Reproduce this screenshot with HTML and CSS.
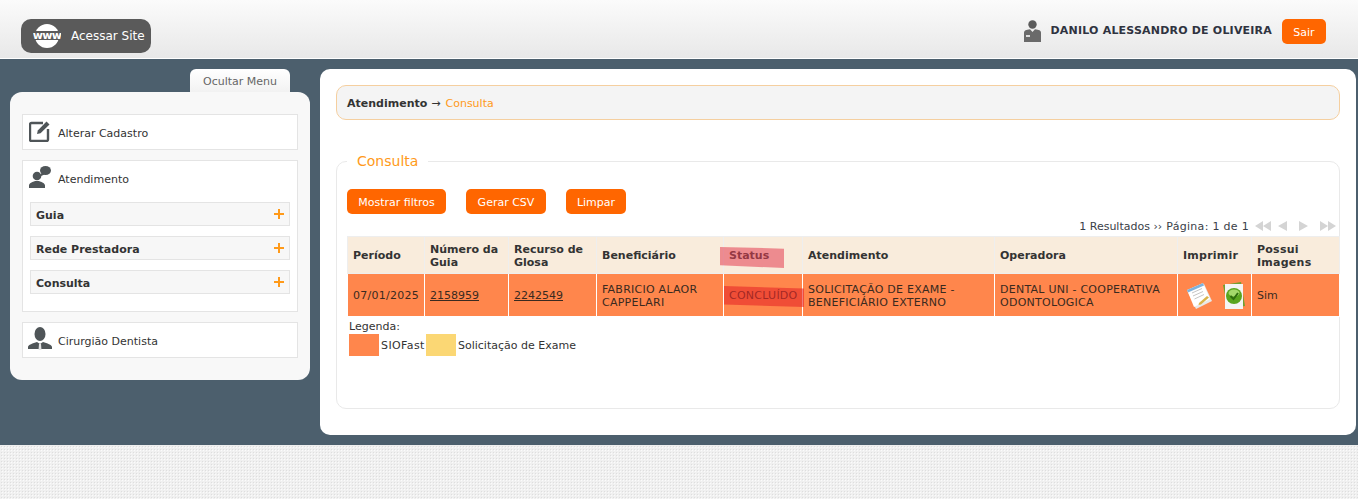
FILE: index.html
```html
<!doctype html>
<html lang="pt-BR">
<head>
    <meta charset="UTF-8">
    <title>Consulta</title>
    <link rel="stylesheet" href="styles.css">
</head>
<body>
    <header class="topbar">
        <a class="site-btn" href="#">
            <svg class="site-icon" width="28" height="24" viewBox="0 0 28 24">
                <circle cx="14" cy="12" r="12" fill="#fff"/>
                <rect x="0" y="7" width="28" height="9" fill="#5a5a5a"/>
                <text x="14" y="15" text-anchor="middle" class="www">www</text>
            </svg>
            Acessar Site
        </a>
        <div class="user">
            <svg width="17" height="22" viewBox="0 0 17 22">
                <circle cx="8.500" cy="4.500" r="4.200" fill="#5c5c5c"/>
                <path d="M0 22V12.500C0 10.500 2 9.800 6 9.200L8.500 12L11 9.200C15 9.800 17 10.500 17 12.500V22Z" fill="#6a6a6a"/>
                <rect x="2" y="15" width="4" height="2" fill="#ddd"/>
            </svg>
            <strong class="user-name">DANILO ALESSANDRO DE OLIVEIRA</strong>
            <a class="btn btn-exit" href="#">Sair</a>
        </div>
    </header>

    <div class="page">
        <aside class="sidebar">
            <div class="menu-tab">Ocultar Menu</div>
            <nav class="menu">
                <div class="menu-item">
                    <div class="menu-head">
                        <svg width="22" height="22" viewBox="0 0 22 22">
                            <path d="M14 3H2.500A1.500 1.500 0 0 0 1 4.500V19.500A1.500 1.500 0 0 0 2.500 21H17.500A1.500 1.500 0 0 0 19 19.500V9" fill="none" stroke="#4f5558" stroke-width="2.400"/>
                            <path d="M8 14L8.800 10.500L17.500 1.500L20.500 4.500L11.500 13.200Z" fill="#4f5558"/>
                        </svg>
                        Alterar Cadastro
                    </div>
                </div>
                <div class="menu-item menu-open">
                    <div class="menu-head">
                        <svg width="22" height="22" viewBox="0 0 22 22">
                            <circle cx="8" cy="10" r="4.300" fill="#4f5558"/>
                            <path d="M0 22V19.500C0 17 3.500 16 6 15H10C12.500 16 16 17 16 19.500V22Z" fill="#4f5558"/>
                            <ellipse cx="16.500" cy="4.500" rx="5.500" ry="4.500" fill="#4f5558"/>
                            <path d="M12.500 7L11 10.500L15.500 8.500Z" fill="#4f5558"/>
                        </svg>
                        Atendimento
                    </div>
                    <div class="submenu">Guia<span class="plus"></span></div>
                    <div class="submenu">Rede Prestadora<span class="plus"></span></div>
                    <div class="submenu">Consulta<span class="plus"></span></div>
                </div>
                <div class="menu-item">
                    <div class="menu-head menu-head-wide">
                        <svg width="24" height="24" viewBox="0 0 24 24">
                            <ellipse cx="12" cy="7" rx="5.500" ry="7" fill="#4f5558"/>
                            <path d="M0 22V20C0 17.500 5 16.500 9 15L12 17L15 15C19 16.500 24 17.500 24 20V22Z" fill="#4f5558"/>
                            <path d="M11 17H13L13.500 23H10.500Z" fill="#e4e4e4"/>
                        </svg>
                        Cirurgião Dentista
                    </div>
                </div>
            </nav>
        </aside>

        <main class="content">
            <div class="breadcrumb"><strong>Atendimento</strong> → <span class="orange">Consulta</span></div>

            <fieldset class="panel">
                <legend>Consulta</legend>
                <div class="actions">
                    <a class="btn btn-filter" href="#">Mostrar filtros</a>
                    <a class="btn btn-csv" href="#">Gerar CSV</a>
                    <a class="btn btn-clear" href="#">Limpar</a>
                </div>
                <div class="pager">
                    <span>1 Resultados ››</span>
                    <span class="pager-page">Página: 1 de 1</span>
                    <svg width="82" height="10" viewBox="0 0 82 10" class="pager-arrows">
                        <path d="M8 0V10L0 5ZM16 0V10L8 5Z M32 0V10L23 5Z M44 0V10L53 5Z M65 0V10L73 5ZM73 0V10L81 5Z" fill="#d4d4d4"/>
                    </svg>
                </div>
                <table class="grid">
                    <colgroup>
                        <col class="c1"><col class="c2"><col class="c3"><col class="c4"><col class="c5">
                        <col class="c6"><col class="c7"><col class="c8"><col class="c9">
                    </colgroup>
                    <thead>
                        <tr>
                            <th>Período</th>
                            <th>Número da Guia</th>
                            <th>Recurso de Glosa</th>
                            <th>Beneficiário</th>
                            <th class="marked">Status<span class="mark mark-head"></span></th>
                            <th>Atendimento</th>
                            <th>Operadora</th>
                            <th class="wide-head">Imprimir</th>
                            <th class="wide-head">Possui Imagens</th>
                        </tr>
                    </thead>
                    <tbody>
                        <tr>
                            <td class="caps">07/01/2025</td>
                            <td><a href="#">2158959</a></td>
                            <td><a href="#">2242549</a></td>
                            <td class="caps">FABRICIO ALAOR CAPPELARI</td>
                            <td class="marked caps">CONCLUÍDO<span class="mark mark-row"></span></td>
                            <td class="caps">SOLICITAÇÃO DE EXAME - BENEFICIÁRIO EXTERNO</td>
                            <td class="caps">DENTAL UNI - COOPERATIVA ODONTOLOGICA</td>
                            <td class="print-cell">
                                <svg width="28" height="28" viewBox="0 0 28 28">
                                    <path d="M2 10L18 2L26 19L10 27Z" fill="#e8e8e8"/>
                                    <path d="M1 8L17 1L24 17L8 25Z" fill="#fff"/>
                                    <path d="M1 8L17 1L18 3.500L2 10.500Z" fill="#7fb2dc"/>
                                    <path d="M6 11L16 6.500M7 14L17 9.500M8.500 17L18 12.500" stroke="#c5c5c5"/>
                                    <path d="M13 21L21 14L23 15.500L15 22.500L12.500 23Z" fill="#d9b44a"/>
                                </svg>
                                <svg width="24" height="28" viewBox="0 0 24 28">
                                    <path d="M1 3L19 0L23 24L6 27Z" fill="#6fa030"/>
                                    <rect x="3" y="2" width="18" height="25" fill="#f4f4f4"/>
                                    <circle cx="12" cy="14" r="8" fill="#5aa51f"/>
                                    <ellipse cx="12" cy="11" rx="5.500" ry="3.500" fill="#a4d96b"/>
                                    <path d="M8.500 14L11.500 17L16 11" fill="none" stroke="#2f6d0e" stroke-width="2"/>
                                </svg>
                            </td>
                            <td>Sim</td>
                        </tr>
                    </tbody>
                </table>
                <div class="legend-title">Legenda:</div>
                <div class="legend">
                    <span class="swatch swatch-siofast"></span><span class="legend-siofast">SIOFast</span>
                    <span class="swatch swatch-exame"></span><span>Solicitação de Exame</span>
                </div>
            </fieldset>
        </main>
    </div>

    <footer class="footer"></footer>
</body>
</html>
```

FILE: styles.css
```css
* {
    box-sizing: border-box;
}
html, body {
    height: 100%;
}
body {
    margin: 0;
    font-family: "DejaVu Sans", Verdana, sans-serif;
    font-size: 11px;
    color: #333;
    overflow: hidden;
}
a {
    color: inherit;
}
.orange {
    color: #ff9a1a;
    margin-left: 1px;
}

/* topo */
.topbar {
    height: 59px;
    border-bottom: 1px solid #fff;
    background: linear-gradient(#fbfbfb, #e8e8e8);
    display: flex;
    justify-content: space-between;
    align-items: flex-start;
    padding: 19px 32px 0 21px;
}
.site-btn {
    width: 130px;
    height: 34px;
    background: #5a5a5a;
    border-radius: 10px;
    color: #fff;
    text-decoration: none;
    font-size: 12px;
    display: flex;
    align-items: center;
    gap: 10px;
    padding-left: 12px;
}
.www {
    font-size: 11px;
    font-weight: bold;
    fill: #fff;
    font-family: "DejaVu Sans", sans-serif;
    letter-spacing: -0.6px;
}
.user {
    display: flex;
    align-items: flex-start;
    color: #2f3340;
}
.user svg {
    margin-top: 1px;
}
.user-name {
    margin: 5px 10px 0 10px;
    letter-spacing: 0.2px;
}
.btn {
    display: flex;
    align-items: center;
    justify-content: center;
    background: #ff6600;
    color: #fff;
    border-radius: 5px;
    text-decoration: none;
    height: 25px;
    padding-top: 2px;
}
.btn-exit {
    width: 44px;
}

/* area central */
.page {
    height: 386px;
    background: #4c5f6d;
    display: flex;
    padding: 10px 2px 10px 10px;
    gap: 10px;
}
.sidebar {
    width: 300px;
    flex: none;
}
.menu-tab {
    width: 100px;
    height: 23px;
    margin-left: 180px;
    padding-top: 2px;
    background: linear-gradient(#fff, #f2f2f2);
    border-radius: 6px 6px 0 0;
    color: #666;
    display: flex;
    align-items: center;
    justify-content: center;
}
.menu {
    height: 288px;
    background: #f8f8f8;
    border-radius: 12px;
    padding: 22px 12px;
    display: flex;
    flex-direction: column;
    gap: 10px;
}
.menu-item {
    background: #fff;
    border: 1px solid #e4e4e4;
    min-height: 36px;
}
.menu-open {
    height: 152px;
}
.menu-head {
    height: 34px;
    display: flex;
    align-items: center;
    gap: 7px;
    padding: 4px 0 0 6px;
    color: #333;
    line-height: 16px;
}
.menu-head svg {
    margin-top: -6px;
}
.menu-head-wide {
    padding-left: 5px;
    gap: 6px;
}
.submenu {
    height: 24px;
    margin: 10px 7px 0;
    padding: 2px 5px 0;
    background: #f7f7f7;
    border: 1px solid #e4e4e4;
    font-weight: bold;
    display: flex;
    align-items: center;
    justify-content: space-between;
}
.menu-head + .submenu {
    margin-top: 7px;
}
.plus {
    width: 10px;
    height: 10px;
    margin-top: -2px;
    background:
        linear-gradient(#ff9a1a, #ff9a1a) center / 10px 2px no-repeat,
        linear-gradient(#ff9a1a, #ff9a1a) center / 2px 10px no-repeat;
}

/* conteudo */
.content {
    flex: 1;
    min-width: 0;
    background: #fff;
    border-radius: 10px;
    padding: 16px 16px 0;
}
.breadcrumb {
    height: 35px;
    padding: 2px 0 0 10px;
    background: #f4f4f4;
    border: 1px solid #f5cf9f;
    border-radius: 10px;
    display: flex;
    align-items: center;
    gap: 4px;
}
.panel {
    height: 256px;
    margin: 33px 0 0;
    padding: 0 0 0 10px;
    border: 1px solid #e9e9e9;
    border-radius: 10px;
    min-width: 0;
}
.panel legend {
    color: #ff9a1a;
    font-size: 14px;
    padding: 0 10px;
    margin-left: 0;
}
.actions {
    display: flex;
    gap: 20px;
    margin-top: 20px;
}
.btn-filter {
    width: 99px;
}
.btn-csv {
    width: 80px;
}
.btn-clear {
    width: 60px;
}
.pager {
    height: 22px;
    display: flex;
    justify-content: flex-end;
    align-items: center;
    padding: 2px 2px 0 0;
    color: #3a4048;
}
.pager-page {
    margin-left: 4px;
    letter-spacing: 0.3px;
}
.pager-arrows {
    margin-left: 6px;
}
.grid {
    width: 992px;
    table-layout: fixed;
    border-collapse: collapse;
}
.c1 { width: 77px; }
.c2 { width: 84px; }
.c3 { width: 88px; }
.c4 { width: 127px; }
.c5 { width: 79px; }
.c6 { width: 192px; }
.c7 { width: 183px; }
.c8 { width: 74px; }
.c9 { width: 88px; }
.grid th {
    height: 37px;
    background: #f9ecdc;
    border: 1px solid #eeeeee;
    text-align: left;
    padding: 1px 5px 0;
    line-height: 13px;
    color: #333;
}
.grid .wide-head {
    letter-spacing: 0.25px;
}
.grid td {
    height: 43px;
    background: #ff864c;
    border: 1px solid #fff;
    padding: 1px 5px 0;
    line-height: 13px;
    color: #3a2a20;
}
.grid .caps {
    letter-spacing: 0.25px;
}
.marked {
    position: relative;
}
.mark {
    position: absolute;
    display: block;
    pointer-events: none;
}
.mark-head {
    left: -4px;
    top: 9px;
    width: 64px;
    height: 22px;
    background: rgba(228, 60, 80, 0.55);
    clip-path: polygon(0 4%, 100% 12%, 100% 100%, 0 88%);
}
.mark-row {
    left: 0;
    top: 12px;
    width: 80px;
    height: 21px;
    background: rgba(230, 40, 40, 0.6);
    clip-path: polygon(0 0, 100% 12%, 100% 100%, 0 88%);
}
.print-cell {
    white-space: nowrap;
    padding-left: 8px !important;
}
.print-cell svg {
    vertical-align: middle;
    margin-right: 4px;
}
.legend-title {
    margin: 3px 0 0 2px;
    height: 14px;
    line-height: 14px;
}
.legend {
    display: flex;
    align-items: center;
    margin: 0 0 0 2px;
    height: 22px;
}
.swatch {
    width: 30px;
    height: 22px;
}
.swatch-siofast {
    background: #ff864c;
    margin-right: 2px;
}
.legend-siofast {
    width: 45px;
    letter-spacing: 0.4px;
}
.swatch-exame {
    background: #fbd774;
    margin-right: 2px;
}

/* rodape */
.footer {
    height: 54px;
    background-color: #f0f0f0;
    background-image:
        radial-gradient(circle, #dedede 0.7px, transparent 1px),
        radial-gradient(circle, #fbfbfb 0.7px, transparent 1px);
    background-size: 3px 3px;
    background-position: 0 0, 1px 1px;
}
```
